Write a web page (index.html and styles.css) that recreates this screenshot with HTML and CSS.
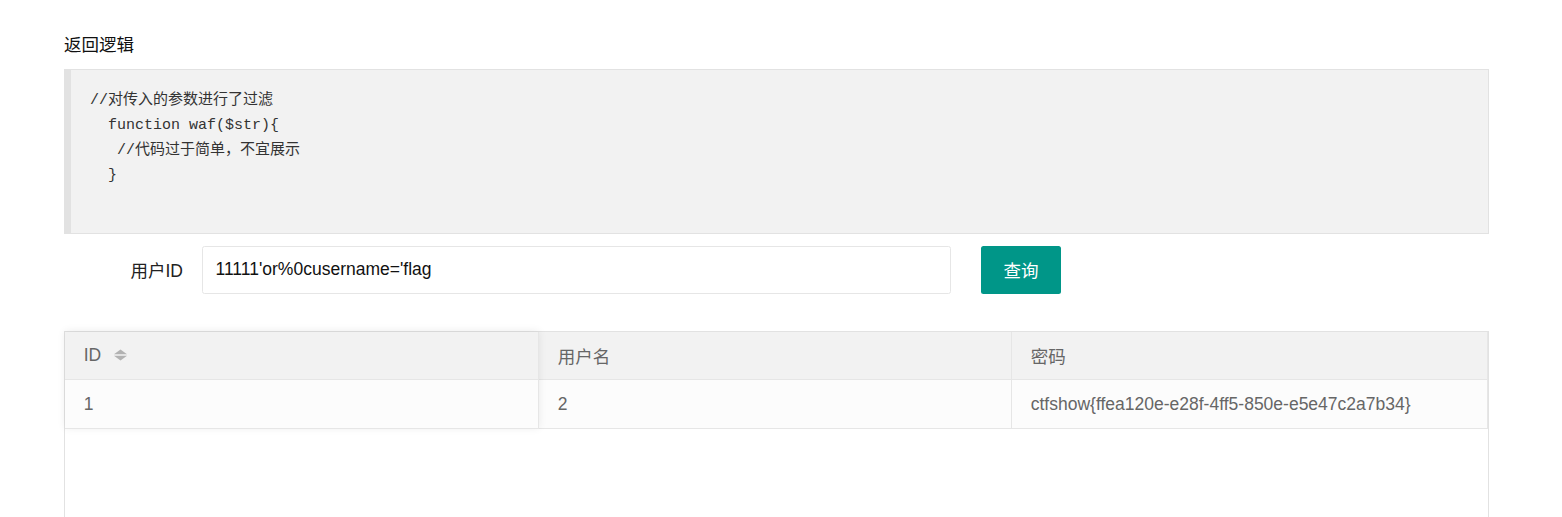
FILE: index.html
```html
<!DOCTYPE html>
<html lang="zh-CN">
<head>
<meta charset="utf-8">
<title>返回逻辑</title>
<link rel="stylesheet" href="styles.css">
</head>
<body>
<div class="page">
  <div class="title">返回逻辑</div>
  <pre class="code">//对传入的参数进行了过滤
  function waf($str){
   //代码过于简单，不宜展示
  }</pre>
  <form class="form-row">
    <label class="form-label">用户ID</label>
    <input class="input" type="text" value="11111'or%0cusername='flag">
    <button class="btn" type="button">查询</button>
  </form>
  <div class="table-view">
    <div class="tbl">
      <div class="col col-fixed">
        <div class="th">ID <svg class="sort" width="13" height="12" viewBox="0 0 13 12"><polygon points="6.5,0.5 13,5.3 0,5.3" fill="#b2b2b2"/><polygon points="0,6.7 13,6.7 6.5,11.5" fill="#b2b2b2"/></svg></div>
        <div class="td">1</div>
      </div>
      <div class="col col-2">
        <div class="th">用户名</div>
        <div class="td">2</div>
      </div>
      <div class="col col-3">
        <div class="th">密码</div>
        <div class="td">ctfshow{ffea120e-e28f-4ff5-850e-e5e47c2a7b34}</div>
      </div>
    </div>
  </div>
</div>
</body>
</html>
```
FILE: styles.css
```css
html, body {
  margin: 0;
  padding: 0;
  background: #fff;
}
body {
  font-family: "Liberation Sans", Arial, "Noto Sans CJK SC", sans-serif;
  font-size: 17.5px;
  color: #333;
}
.page {
  width: 1425px;
  padding: 33px 0 0 64px;
}
.title {
  line-height: 25px;
  color: #111;
  margin-bottom: 11px;
}
.code {
  box-sizing: border-box;
  height: 165px;
  margin: 0 0 12px;
  padding: 17.5px 19px;
  border: 1px solid #e2e2e2;
  border-left-width: 7px;
  background: #f2f2f2;
  color: #333;
  font-family: "Liberation Mono", "Courier New", "Noto Sans CJK SC", monospace;
  font-size: 15px;
  line-height: 25px;
  white-space: pre;
}
.form-row {
  display: flex;
  align-items: center;
  margin: 0;
  height: 47.5px;
}
.form-label {
  box-sizing: border-box;
  width: 138px;
  padding-right: 19px;
  text-align: right;
  color: #222;
}
.input {
  box-sizing: border-box;
  width: 749px;
  height: 47.5px;
  padding: 0 12.5px;
  border: 1px solid #e6e6e6;
  border-radius: 2.5px;
  font-family: inherit;
  font-size: 17.5px;
  color: #111;
  background: #fff;
  outline: none;
}
.btn {
  box-sizing: border-box;
  width: 80px;
  height: 47.5px;
  margin-left: 30px;
  border: none;
  border-radius: 2.5px;
  background: #009688;
  color: #fff;
  font-family: inherit;
  font-size: 17.5px;
  padding: 0;
}
.table-view {
  box-sizing: border-box;
  margin-top: 37.5px;
  height: 187px;
  border: 1px solid #e2e2e2;
  background: #fff;
}
.tbl {
  display: flex;
}
.col {
  display: flex;
  flex-direction: column;
}
.col-fixed {
  width: 474px;
  position: relative;
  z-index: 1;
  box-shadow: 0 -1px 8px rgba(0, 0, 0, 0.08);
  background: #fff;
}
.col-2 {
  width: 473px;
}
.col-3 {
  width: 476px;
}
.th, .td {
  box-sizing: border-box;
  display: flex;
  align-items: center;
  padding: 0 18.75px;
  border-right: 1px solid #e6e6e6;
  border-bottom: 1px solid #e6e6e6;
  color: #666;
  font-size: 17.5px;
}
.th {
  height: 48px;
  background: #f2f2f2;
}
.td {
  height: 49px;
  background: #fcfcfc;
}
.sort {
  margin-left: 13px;
  margin-top: -2px;
}
```
